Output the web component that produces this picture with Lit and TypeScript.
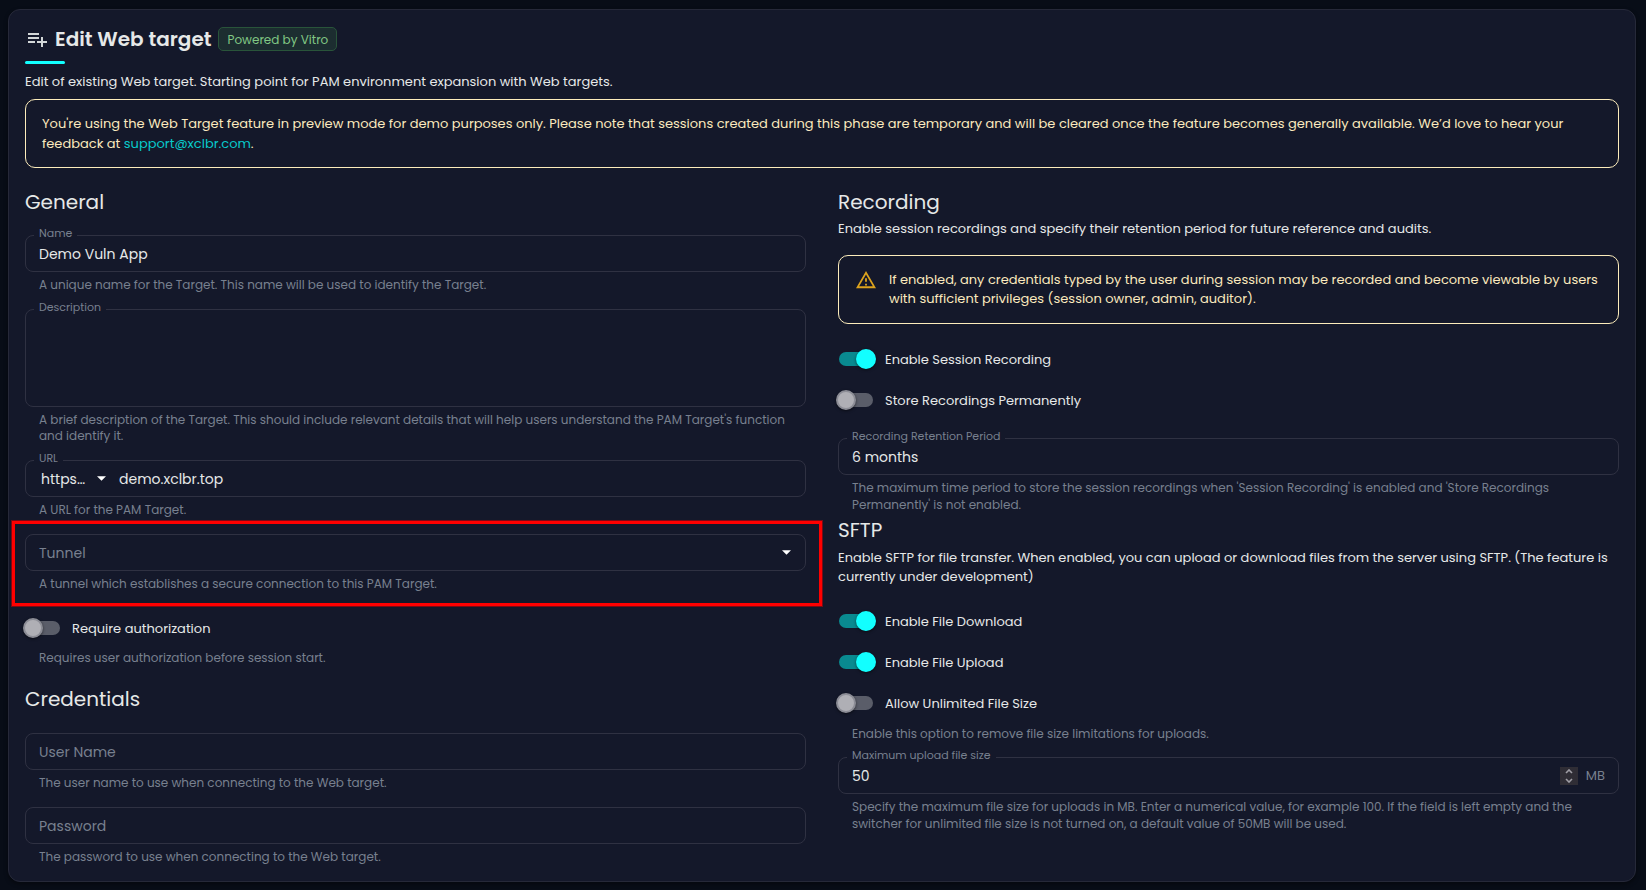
import { LitElement, html, css, nothing, TemplateResult } from "lit";
import { customElement } from "lit/decorators.js";

interface FieldOptions {
  id: string;
  label: string;
  hint: string;
  floating?: boolean;
  control: TemplateResult;
  extra?: TemplateResult;
}

@customElement("app-root")
export class AppRoot extends LitElement {
  static styles = css`
    :host {
      display: block;
      box-sizing: border-box;
      min-height: 100vh;
      padding: 9px 10px 8px 8px;
      background: #080d17;
      color: #e6e8e8;
      font-family: Poppins, Inter, "Open Sans", sans-serif;
      font-size: 13px;
      line-height: 19px;
    }
    *,
    *::before {
      box-sizing: border-box;
    }
    h1,
    h2,
    p {
      margin: 0;
    }
    .card {
      padding: 16px;
      border: 1px solid #262939;
      border-radius: 12px;
      background: #14182a;
      box-shadow: 0 2px 4px #0006;
    }
    .title {
      display: flex;
      align-items: center;
      height: 26px;
      gap: 7px;
    }
    .title-icon {
      width: 23px;
      height: 24px;
      fill: #d3d7d8;
    }
    h1 {
      font-size: 20px;
      line-height: 26px;
      font-weight: 600;
    }
    .badge {
      height: 24px;
      padding: 1px 8px 0;
      border: 1px solid #29543a;
      border-radius: 5px;
      background: #1c2d30;
      color: #81c784;
      font-size: 12px;
      line-height: 22px;
    }
    .accent {
      width: 40px;
      height: 3px;
      margin: 9px 0 8px;
      border-radius: 2px;
      background: #12ffff;
    }
    .alert {
      display: flex;
      gap: 12px;
      padding: 14px 16px 13px;
      border: 1px solid #fcecbb;
      border-radius: 10px;
      color: #fbe9be;
      line-height: 20px;
    }
    .alert a {
      color: #08c9cb;
      text-decoration: none;
    }
    .alert svg {
      flex: none;
      width: 22px;
      height: 20px;
      fill: #dda31d;
    }
    .intro-alert {
      margin-top: 8px;
    }
    .warning {
      margin: 17px 0 15px;
      padding-bottom: 15px;
      line-height: 19px;
    }
    .columns {
      display: grid;
      grid-template-columns: 1fr 1fr;
      gap: 32px;
      margin-top: 19px;
    }
    h2 {
      font-size: 20px;
      line-height: 30px;
      font-weight: 400;
    }
    .lead {
      margin-top: 2px;
    }
    .fields {
      display: flex;
      flex-direction: column;
      gap: 16px;
      margin-top: 18px;
    }
    .spaced {
      margin-top: 18px;
      padding-bottom: 1px;
    }
    .sftp {
      margin-top: 2px;
      padding-bottom: 1px;
    }
    .switches {
      display: flex;
      flex-direction: column;
      gap: 1px;
      margin-top: 15px;
    }
    .retention {
      margin-top: 18px;
    }
    .limit {
      margin-top: 15px;
    }
    .field {
      position: relative;
    }
    .box {
      position: relative;
      display: flex;
      align-items: center;
      min-height: 37px;
      padding: 0 13px;
      border: 1px solid #2f3142;
      border-radius: 8px;
    }
    .box.tall {
      min-height: 98px;
    }
    .float,
    .inside {
      position: absolute;
      color: #78808f;
      pointer-events: none;
    }
    .float {
      top: -11px;
      left: 8px;
      padding: 0 5px;
      background: #14182a;
      font-size: 11px;
      line-height: 16px;
    }
    .inside {
      left: 13px;
      font-size: 14px;
      line-height: 20px;
    }
    input.text,
    textarea,
    select {
      min-width: 0;
      margin: 0;
      padding: 0;
      border: 0;
      outline: 0;
      background: transparent;
      color: inherit;
      font: inherit;
      font-size: 14px;
      line-height: 20px;
      appearance: none;
    }
    input.text,
    textarea {
      flex: 1;
    }
    textarea {
      height: 70px;
      resize: none;
    }
    input[type="number"] {
      appearance: textfield;
    }
    input[type="number"]::-webkit-inner-spin-button {
      display: none;
    }
    .picker {
      display: grid;
      flex: 1;
      align-items: center;
    }
    .picker > * {
      grid-area: 1 / 1;
    }
    .picker svg {
      justify-self: end;
      width: 9px;
      height: 5px;
      fill: #fff;
      pointer-events: none;
    }
    .picker.wide {
      padding-right: 1px;
    }
    .picker.scheme {
      flex: none;
      width: 65px;
      margin: 0 13px 0 2px;
    }
    .hint {
      padding: 5px 14px 0;
      color: #78808f;
      font-size: 12px;
      line-height: 16px;
    }
    .policies .hint {
      padding-top: 4px;
      line-height: 17px;
    }
    .hint.close,
    .policies .hint.close {
      padding-top: 2px;
    }
    .policies .hint.close {
      line-height: 16px;
    }
    .highlight {
      position: absolute;
      inset: -13px -16px -14px -13px;
      border: 3px solid #f00;
      outline: 1px solid #7a0a14;
      pointer-events: none;
    }
    .switch {
      display: flex;
      align-items: center;
      height: 40px;
      gap: 12px;
      padding-left: 1px;
    }
    .switch input {
      flex: none;
      width: 34px;
      height: 14px;
      margin: 0;
      border-radius: 7px;
      background: #5a5d69;
      appearance: none;
    }
    .switch input::before {
      content: "";
      display: block;
      width: 20px;
      height: 20px;
      margin: -3px 0 0 -3px;
      border: 2px solid #8c8d96;
      border-radius: 50%;
      background: #afafb5;
      box-shadow: 0 1px 3px #0008;
    }
    .switch input:checked {
      background: #098a90;
    }
    .switch input:checked::before {
      margin-left: 17px;
      border-color: #12ffff;
      background: #12ffff;
    }
    .spinner {
      display: flex;
      flex-direction: column;
      width: 18px;
      height: 18px;
      margin-right: 8px;
      background: #2f2d35;
    }
    .spinner button {
      display: grid;
      place-items: center;
      height: 9px;
      padding: 0;
      border: 0;
      background: none;
      color: #a09ea5;
    }
    .spinner svg {
      width: 8px;
      height: 5px;
      fill: none;
      stroke: currentColor;
      stroke-width: 1.6;
    }
    .unit {
      color: #78808f;
    }
  `;

  private arrow = html`<svg viewBox="0 0 10 5" aria-hidden="true"><path d="M0 0h10L5 5z" /></svg>`;

  private field(o: FieldOptions, tall = false) {
    return html`<div class="field">
      <div class="box ${tall ? "tall" : ""}">
        ${o.control}
        <label class=${o.floating ? "float" : "inside"} for=${o.id}>${o.label}</label>
      </div>
      <div class="hint">${o.hint}</div>
      ${o.extra ?? nothing}
    </div>`;
  }

  private toggle(id: string, label: string, on: boolean) {
    return html`<label class="switch" for=${id}>
      <input id=${id} type="checkbox" role="switch" ?checked=${on} />
      <span>${label}</span>
    </label>`;
  }

  render() {
    return html`<main class="card">
      <header>
        <div class="title">
          <svg class="title-icon" viewBox="0 0 23 24" aria-hidden="true">
            <path
              d="M14 10H3v2h11v-2zm0-4H3v2h11V6zm4 8v-4h-2v4h-4v2h4v4h2v-4h4v-2h-4zM3 16h7v-2H3v2z"
            />
          </svg>
          <h1>Edit Web target</h1>
          <span class="badge">Powered by Vitro</span>
        </div>
        <div class="accent"></div>
        <p>
          Edit of existing Web target. Starting point for PAM environment expansion with Web
          targets.
        </p>
      </header>
      <div class="alert intro-alert">
        <p>
          You're using the Web Target feature in preview mode for demo purposes only. Please note
          that sessions created during this phase are temporary and will be cleared once the feature
          becomes generally available. We’d love to hear your feedback at
          <a href="mailto:support@xclbr.com">support@xclbr.com</a>.
        </p>
      </div>
      <form class="columns">
        <section>
          <h2>General</h2>
          <div class="fields">
            ${this.field({
              id: "name",
              label: "Name",
              floating: true,
              hint: "A unique name for the Target. This name will be used to identify the Target.",
              control: html`<input class="text" id="name" type="text" value="Demo Vuln App" />`,
            })}
            ${this.field(
              {
                id: "description",
                label: "Description",
                floating: true,
                hint: "A brief description of the Target. This should include relevant details that will help users understand the PAM Target's function and identify it.",
                control: html`<textarea id="description"></textarea>`,
              },
              true
            )}
            ${this.field({
              id: "url",
              label: "URL",
              floating: true,
              hint: "A URL for the PAM Target.",
              control: html`<span class="picker scheme">
                  <select aria-label="Scheme">
                    <option>https…</option>
                  </select>
                  ${this.arrow}
                </span>
                <input class="text" id="url" type="text" value="demo.xclbr.top" />`,
            })}
            ${this.field({
              id: "tunnel",
              label: "Tunnel",
              hint: "A tunnel which establishes a secure connection to this PAM Target.",
              control: html`<span class="picker wide">
                <select id="tunnel">
                  <option></option>
                </select>
                ${this.arrow}
              </span>`,
              extra: html`<div class="highlight"></div>`,
            })}
            <div>
              ${this.toggle("authorization", "Require authorization", false)}
              <div class="hint close">Requires user authorization before session start.</div>
            </div>
          </div>
          <h2 class="spaced">Credentials</h2>
          <div class="fields">
            ${this.field({
              id: "user",
              label: "User Name",
              hint: "The user name to use when connecting to the Web target.",
              control: html`<input class="text" id="user" type="text" />`,
            })}
            ${this.field({
              id: "password",
              label: "Password",
              hint: "The password to use when connecting to the Web target.",
              control: html`<input class="text" id="password" type="password" />`,
            })}
          </div>
        </section>
        <section class="policies">
          <h2>Recording</h2>
          <p class="lead">
            Enable session recordings and specify their retention period for future reference and
            audits.
          </p>
          <div class="alert warning">
            <svg viewBox="0 1 24 22" aria-hidden="true">
              <path
                d="M12 5.99L19.53 19H4.47L12 5.99M12 2L1 21h22L12 2zm1 14h-2v2h2v-2zm0-6h-2v4h2v-4z"
              />
            </svg>
            <p>
              If enabled, any credentials typed by the user during session may be recorded and
              become viewable by users with sufficient privileges (session owner, admin, auditor).
            </p>
          </div>
          <div class="switches">
            ${this.toggle("record", "Enable Session Recording", true)}
            ${this.toggle("permanent", "Store Recordings Permanently", false)}
          </div>
          <div class="retention">
            ${this.field({
              id: "retention",
              label: "Recording Retention Period",
              floating: true,
              hint: "The maximum time period to store the session recordings when 'Session Recording' is enabled and 'Store Recordings Permanently' is not enabled.",
              control: html`<input class="text" id="retention" type="text" value="6 months" />`,
            })}
          </div>
          <h2 class="sftp">SFTP</h2>
          <p class="lead">
            Enable SFTP for file transfer. When enabled, you can upload or download files from the
            server using SFTP. (The feature is currently under development)
          </p>
          <div class="switches">
            ${this.toggle("download", "Enable File Download", true)}
            ${this.toggle("upload", "Enable File Upload", true)}
            ${this.toggle("unlimited", "Allow Unlimited File Size", false)}
            <div class="hint close">Enable this option to remove file size limitations for uploads.</div>
          </div>
          <div class="limit">
            ${this.field({
              id: "size",
              label: "Maximum upload file size",
              floating: true,
              hint: "Specify the maximum file size for uploads in MB. Enter a numerical value, for example 100. If the field is left empty and the switcher for unlimited file size is not turned on, a default value of 50MB will be used.",
              control: html`<input class="text" id="size" type="number" value="50" />
                <span class="spinner">
                  <button type="button" aria-label="Increase">
                    <svg viewBox="0 0 8 5"><path d="M1 4l3-3 3 3" /></svg>
                  </button>
                  <button type="button" aria-label="Decrease">
                    <svg viewBox="0 0 8 5"><path d="M1 1l3 3 3-3" /></svg>
                  </button>
                </span>
                <span class="unit">MB</span>`,
            })}
          </div>
        </section>
      </form>
    </main>`;
  }
}
